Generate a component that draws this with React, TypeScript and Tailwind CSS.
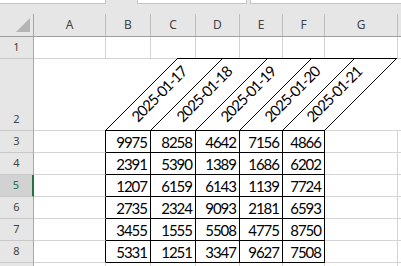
import React from "react"

const COLS = [
  { l: "A", w: 72 },
  { l: "B", w: 45 },
  { l: "C", w: 45 },
  { l: "D", w: 44 },
  { l: "E", w: 43 },
  { l: "F", w: 42 },
  { l: "G", w: 73 },
  { l: "", w: 60 },
]

const DATES = ["2025-01-17", "2025-01-18", "2025-01-19", "2025-01-20", "2025-01-21"]

const DATA = [
  [9975, 8258, 4642, 7156, 4866],
  [2391, 5390, 1389, 1686, 6202],
  [1207, 6159, 6143, 1139, 7724],
  [2735, 2324, 9093, 2181, 6593],
  [3455, 1555, 5508, 4775, 8750],
  [5331, 1251, 3347, 9627, 7508],
]

// x of the border lines left of B .. right of F, relative to the start of column A
const EDGES = [71, 116, 161, 205, 248, 290]

const uiFont = { fontFamily: '"Noto Sans", "Open Sans", sans-serif' }
const cellFont = { fontFamily: 'Lato, "Liberation Sans", sans-serif' }

function RowHead({ n, h, selected }: { n?: number; h: string; selected?: boolean }) {
  return (
    <div
      style={uiFont}
      className={`${h} w-[34px] shrink-0 box-border border-b border-[#c8c8c8] flex items-end justify-center text-[11px] leading-[20px] ${
        selected
          ? "bg-[#d2d2d2] text-[#217346] border-r-2 border-r-[#217346]"
          : "bg-[#e6e6e6] text-[#444] border-r border-r-[#a6a6a6]"
      }`}
    >
      {n !== undefined && <span className="pb-[1px]">{n}</span>}
    </div>
  )
}

export default function App() {
  return (
    <div className="w-[401px] h-[266px] overflow-hidden bg-white">
      {/* ribbon / formula bar edge */}
      <div className="h-[14px] bg-[#e6e6e6] flex">
        <div className="w-[106px] h-[4px] bg-white border-b border-r border-[#c6c6c6] box-border" />
        <div className="w-[31px]" />
        <div className="w-[110px] h-[4px] bg-white border-b border-x border-[#c6c6c6] box-border" />
        <div className="w-[3px]" />
        <div className="flex-1 h-[4px] bg-white border-b border-l border-[#c6c6c6] box-border" />
      </div>

      {/* column headers */}
      <div className="flex h-[22px] bg-[#e6e6e6] border-b border-[#9e9e9e] box-content">
        <div className="w-[34px] shrink-0 border-r border-[#a6a6a6] box-border relative">
          <svg width="33" height="22" className="absolute left-0 top-0">
            <polygon points="30,4 30,18 16,18" fill="#b4b4b4" />
          </svg>
        </div>
        {COLS.map((c, i) => (
          <div
            key={i}
            style={{ ...uiFont, width: c.w }}
            className="shrink-0 box-border border-r border-[#bdbdbd] flex items-center justify-center text-[12px] text-[#444]"
          >
            {c.l}
          </div>
        ))}
      </div>

      {/* row 1 */}
      <div className="flex h-[22px]">
        <RowHead n={1} h="h-[22px]" />
        {COLS.map((c, i) => (
          <div key={i} style={{ width: c.w }} className="shrink-0 box-border border-r border-b border-[#d4d4d4]" />
        ))}
      </div>

      {/* row 2: slanted date headers, text rotated 45° */}
      <div className="flex h-[72px]">
        <RowHead n={2} h="h-[72px]" />
        <div className="relative flex-1 box-border border-b border-[#d4d4d4]">
          <svg width="367" height="74" className="absolute left-0 top-[-1px]" shapeRendering="crispEdges">
            <g stroke="#000" strokeWidth="1" fill="none">
              <line x1={EDGES[0] + 72} y1="0.5" x2={EDGES[5] + 73} y2="0.5" />
              <line x1={EDGES[0]} y1="72.5" x2={EDGES[5] + 1} y2="72.5" />
              {EDGES.map((x) => (
                <line key={x} x1={x + 0.5} y1="72.5" x2={x + 72.5} y2="0.5" />
              ))}
            </g>
          </svg>
          {DATES.map((d, i) => (
            <span
              key={d}
              style={{ ...cellFont, left: (EDGES[i] + EDGES[i + 1]) / 2 + 31 }}
              className="absolute top-[35px] whitespace-nowrap text-[15px] leading-none tracking-[-1px] text-black -translate-x-1/2 -translate-y-1/2 -rotate-45"
            >
              {d}
            </span>
          ))}
        </div>
      </div>

      {/* data rows */}
      {DATA.map((row, r) => (
        <div key={r} className="flex h-[22px]">
          <RowHead n={r + 3} h="h-[22px]" selected={r === 2} />
          <div
            style={{ width: COLS[0].w }}
            className="shrink-0 box-border border-r border-r-black border-b border-b-[#d4d4d4]"
          />
          {row.map((v, i) => (
            <div
              key={i}
              style={{ ...cellFont, width: COLS[i + 1].w }}
              className="shrink-0 box-border border-r border-b border-black flex items-end justify-end pr-[3px] text-[15px] leading-[20px] tracking-[-1px] text-black"
            >
              {v}
            </div>
          ))}
          {COLS.slice(6).map((c, i) => (
            <div key={i} style={{ width: c.w }} className="shrink-0 box-border border-r border-b border-[#d4d4d4]" />
          ))}
        </div>
      ))}

      {/* row 9, only its top edge shows */}
      <div className="flex h-[22px]">
        <RowHead h="h-[22px]" />
        {COLS.map((c, i) => (
          <div key={i} style={{ width: c.w }} className="shrink-0 box-border border-r border-b border-[#d4d4d4]" />
        ))}
      </div>
    </div>
  )
}
